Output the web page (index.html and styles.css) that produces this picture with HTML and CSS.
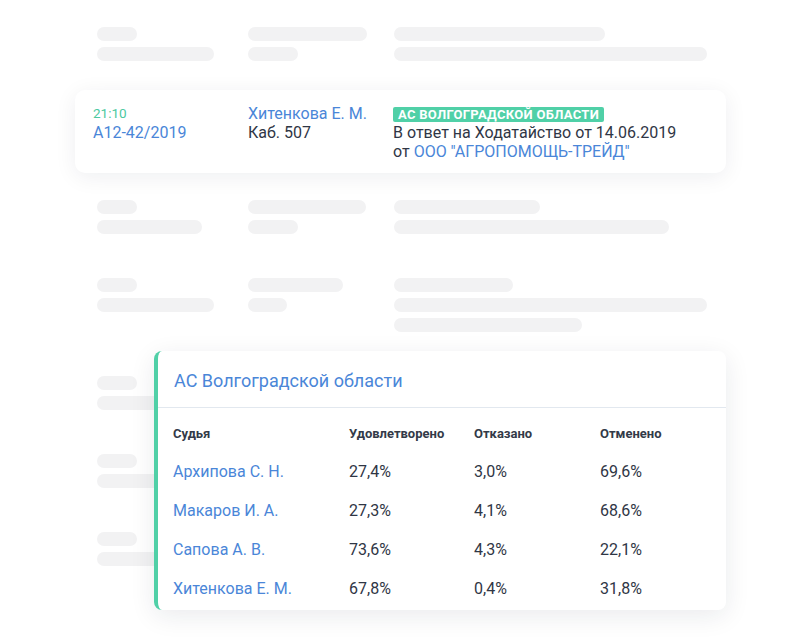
FILE: index.html
```html
<!DOCTYPE html>
<html lang="ru">
  <head>
    <meta charset="UTF-8" />
    <meta name="viewport" content="width=device-width, initial-scale=1.0" />
    <title>Заседания</title>
    <link rel="stylesheet" href="styles.css">
  </head>
  <body>
    <div class="page">
      <div class="list">
        <div class="row">
          <div class="col"><span class="bar" style="width:40px"></span><span class="bar" style="width:117px"></span></div>
          <div class="col"><span class="bar" style="width:119px"></span><span class="bar" style="width:50px"></span></div>
          <div class="col"><span class="bar" style="width:211px"></span><span class="bar" style="width:313px"></span></div>
        </div>

        <div class="row active">
          <div class="col">
            <div class="time">21:10</div>
            <div class="link">А12-42/2019</div>
          </div>
          <div class="col">
            <div class="link">Хитенкова Е. М.</div>
            <div>Каб. 507</div>
          </div>
          <div class="col">
            <div><span class="tag">АС Волгоградской области</span></div>
            <div>В ответ на Ходатайство от 14.06.2019</div>
            <div>от <span class="link">ООО "АГРОПОМОЩЬ-ТРЕЙД"</span></div>
          </div>
        </div>

        <div class="row">
          <div class="col"><span class="bar" style="width:40px"></span><span class="bar" style="width:105px"></span></div>
          <div class="col"><span class="bar" style="width:118px"></span><span class="bar" style="width:50px"></span></div>
          <div class="col"><span class="bar" style="width:146px"></span><span class="bar" style="width:275px"></span></div>
        </div>

        <div class="row">
          <div class="col"><span class="bar" style="width:40px"></span><span class="bar" style="width:117px"></span></div>
          <div class="col"><span class="bar" style="width:95px"></span><span class="bar" style="width:39px"></span></div>
          <div class="col"><span class="bar" style="width:119px"></span><span class="bar" style="width:313px"></span><span class="bar" style="width:188px"></span></div>
        </div>

        <div class="row">
          <div class="col"><span class="bar" style="width:40px"></span><span class="bar" style="width:110px"></span></div>
          <div class="col"><span class="bar" style="width:110px"></span><span class="bar" style="width:50px"></span></div>
          <div class="col"><span class="bar" style="width:180px"></span><span class="bar" style="width:290px"></span></div>
        </div>

        <div class="row">
          <div class="col"><span class="bar" style="width:40px"></span><span class="bar" style="width:110px"></span></div>
          <div class="col"><span class="bar" style="width:100px"></span><span class="bar" style="width:45px"></span></div>
          <div class="col"><span class="bar" style="width:160px"></span><span class="bar" style="width:300px"></span></div>
        </div>

        <div class="row">
          <div class="col"><span class="bar" style="width:40px"></span><span class="bar" style="width:110px"></span></div>
          <div class="col"><span class="bar" style="width:115px"></span><span class="bar" style="width:50px"></span></div>
          <div class="col"><span class="bar" style="width:200px"></span><span class="bar" style="width:280px"></span></div>
        </div>
      </div>

      <div class="stats">
        <div class="stats-title">АС Волгоградской области</div>
        <div class="stats-table">
          <div class="stats-row head">
            <span>Судья</span><span>Удовлетворено</span><span>Отказано</span><span>Отменено</span>
          </div>
          <div class="stats-row">
            <span class="link">Архипова С. Н.</span><span>27,4%</span><span>3,0%</span><span>69,6%</span>
          </div>
          <div class="stats-row">
            <span class="link">Макаров И. А.</span><span>27,3%</span><span>4,1%</span><span>68,6%</span>
          </div>
          <div class="stats-row">
            <span class="link">Сапова А. В.</span><span>73,6%</span><span>4,3%</span><span>22,1%</span>
          </div>
          <div class="stats-row">
            <span class="link">Хитенкова Е. М.</span><span>67,8%</span><span>0,4%</span><span>31,8%</span>
          </div>
        </div>
      </div>
    </div>
  </body>
</html>
```

FILE: styles.css
```css
* {
  margin: 0;
  padding: 0;
  box-sizing: border-box;
}

body {
  background: #ffffff;
  font-family: Roboto, "Noto Sans", sans-serif;
  color: #2f3645;
  font-size: 16px;
}

.page {
  position: relative;
  width: 800px;
  height: 640px;
  overflow: hidden;
}

.list {
  width: 651px;
  margin-left: 75px;
  padding-top: 5px;
}

.row {
  display: grid;
  grid-template-columns: 153px 146px 1fr;
  padding: 19px 20px;
  line-height: 20px;
}

.row .col {
  display: flex;
  flex-direction: column;
  align-items: flex-start;
}

.row .col:first-child .bar {
  margin-left: 2px;
}

.bar {
  display: block;
  height: 14px;
  margin: 3px 0;
  border-radius: 7px;
  background: #f2f2f3;
}

.row.active {
  margin: 7px 0 5px;
  padding: 14px 20px 12px 18px;
  background: #ffffff;
  border-radius: 10px;
  box-shadow: 0 4px 22px rgba(20, 30, 60, 0.07);
  line-height: 19px;
}

.row.active .col:nth-child(2) {
  padding-left: 2px;
}

.row.active .col:nth-child(3) {
  padding-left: 1px;
}

.time {
  font-size: 13.5px;
  color: #4cc9a0;
}

.link {
  color: #4a86d8;
}

.tag {
  display: inline-block;
  padding: 0 5px;
  height: 15px;
  line-height: 15px;
  font-size: 13px;
  font-weight: 700;
  letter-spacing: 0.3px;
  text-transform: uppercase;
  color: #ffffff;
  background: #50d0a7;
  border-radius: 2px;
}

.stats {
  position: absolute;
  left: 154px;
  top: 351px;
  width: 572px;
  height: 259px;
  background: #ffffff;
  border-left: 4px solid #50d0a7;
  border-radius: 8px;
  box-shadow: 0 6px 26px rgba(20, 30, 60, 0.09);
}

.stats-title {
  height: 57px;
  padding: 19px 0 0 16px;
  font-size: 18px;
  line-height: 22px;
  color: #4a86d8;
  border-bottom: 1px solid #e2e8ef;
}

.stats-table {
  padding: 6px 0 0 15px;
}

.stats-row {
  display: grid;
  grid-template-columns: 176px 125px 126px 1fr;
  height: 39px;
  align-items: center;
  font-size: 16px;
}

.stats-row.head {
  height: 38px;
  font-size: 13px;
  font-weight: 700;
  color: #333a48;
}
```
